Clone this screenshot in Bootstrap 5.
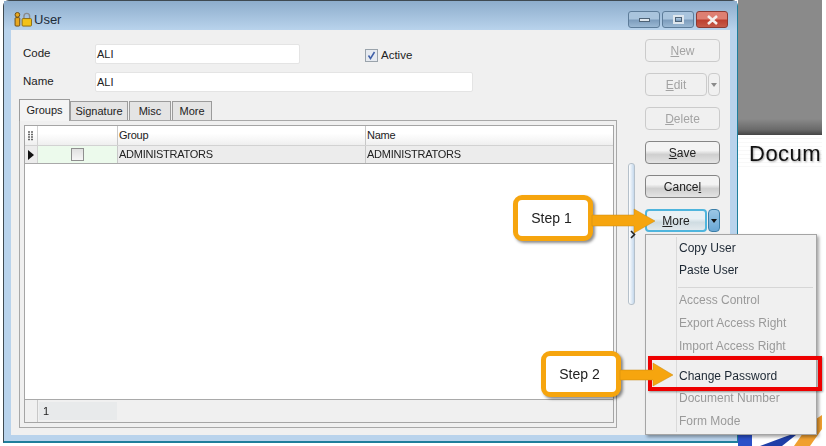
<!DOCTYPE html>
<html lang="en"><head><meta charset="utf-8"><title>User</title>
<link href="https://cdn.jsdelivr.net/npm/bootstrap@5.3.0/dist/css/bootstrap.min.css" rel="stylesheet">
<style>
html,body{margin:0;background:#fff;overflow:hidden}
body{width:826px;height:446px;font-family:"Liberation Sans",sans-serif;font-size:11px;color:#222}
.stage{position:relative;width:826px;height:446px;filter:blur(.4px)}
.deskrow{height:446px}
.spacer-left{width:3px}
.winframe{width:735px;height:443px;border:1px solid #3f4a52;border-right-color:#1f7f9c;border-bottom-color:#1f7f9c;border-bottom-width:2px;border-radius:6px 6px 0 0;background:#b9d3ec;padding:0 7px 6px 7px}
.titlebar{height:29px;margin:0 -7px;padding:8px 9px 0 9px;background:linear-gradient(#8dadcc,#b9d3ec)}
.ttl{font-size:13px;margin-left:0;color:#1d2b38}
.capb{height:17px;width:32px;border:1px solid #5d7c99;border-radius:3px;background:linear-gradient(#a9c4dd 45%,#7d9dbd 55%,#9bb8d3);margin-left:2px}
.capb.cl{background:linear-gradient(#de7f72 45%,#bd4030 55%,#c65b49);border-color:#8b3a33}
.glyph-min{width:11px;height:4px;background:#dfe7ee;border:1px solid #4d6276;margin-top:6px}
.glyph-max{width:11px;height:9px;border:2px solid #dfe7ee;outline:1px solid #4d6276;outline-offset:-3px}
.winbody{height:405px;background:#f0f0f0}
.leftpane{width:606px;padding:10px 0 0 8px}
.rightpane{width:94px;padding:9px 9px 0 10px}
.lbl{width:76px;padding-left:4px;font-size:11.5px}
.fieldrow{height:28px}
.txt{background:#fff;border:1px solid #e4e4e4;border-radius:2px;height:20px;line-height:18px;padding-left:1px}
.w1{width:205px}.w2{width:378px}
.chkwrap{margin-left:65px;margin-top:3px;font-size:11.5px}
.chk{width:13px;height:13px;border:1px solid #9aa3ab;background:#e6eaf0;margin-right:3px;display:flex;align-items:center;justify-content:center}
.tabrow{height:21px;margin-top:3px;align-items:flex-end}
.tabi{height:19px;line-height:18px;border:1px solid #9b9b9b;border-bottom:0;background:#e4e4e4;margin-right:1px;text-align:center}
.tw1{width:58px}.tw2{width:42px}.tw3{width:40px}
.tabi.on{height:22px;line-height:20px;background:#f4f4f4;margin-right:0;position:relative;top:1px;width:51px}
.tabpanel{height:308px;border:1px solid #a8a8a8;padding:4px 2px 4px 4px}
.gridbox{height:100%;border:1px solid #a5a5a5;background:#fff;letter-spacing:-.25px}
.ghead{height:19px;background:linear-gradient(#fff 40%,#efefef);line-height:19px}
.grow-row{height:19px;background:#ececec;border-top:1px solid #d2d2d2;border-bottom:1px solid #a9a9a9;line-height:17px}
.c0{width:13px;border-right:1px solid #d2d2d2;text-align:center}
.c1{width:80px;border-right:1px solid #c8c8c8}
.c2{width:248px;border-right:1px solid #c8c8c8;padding-left:1px}
.c3{flex:1;padding-left:1px}
.c1.act{background:#ecfaec}
.gbox{width:13px;height:13px;border:1px solid #8f8f8f;background:linear-gradient(#e0e0e0,#f6f6f6)}
.gstatus{height:23px;background:#f0f0f0;border-top:1px solid #a9a9a9}
.stcell{width:78px;margin:2px 0 2px 1px;background:#e8eaeb;padding-left:4px;line-height:19px}
.stgut{width:13px;border-right:1px solid #c8c8c8}
.splitbar{width:7px;height:142px;margin:133px 0 0 11px;border:1px solid #b5c0ca;border-radius:3px;background:linear-gradient(90deg,#fff,#c4d8ec)}
.btnw{height:23px;margin-bottom:11px}
.wbtn{--bs-btn-padding-y:0;--bs-btn-padding-x:0;--bs-btn-font-size:12px;--bs-btn-border-radius:4px;height:23px;width:100%;background:linear-gradient(#f3f3f3 40%,#cfcfcf 60%,#e4e4e4);border-color:#858585;color:#222}
.wbtn.dis,.wbtn.dis:disabled{background:#f0f0f0;border-color:#cbcbcb;color:#a3a3a3;opacity:1}
.wbtn.main{width:62px}
.wbtn.arr{width:12px;margin-left:1px;padding:0}
.wbtn.hot{border:2px solid #4fb5dd;background:linear-gradient(#e9f1f5 40%,#cfdce2 60%,#e2e9ed)}
.wbtn.hotarr{background:linear-gradient(#9cc7e6,#6aa7d4);border-color:#3b7ea8}
.tri{display:inline-block;border:3.5px solid transparent;border-top:4px solid #8a8a8a;border-bottom:0;vertical-align:middle}
.hotarr .tri{border-top-color:#111}
.sidepanel{width:84px;height:446px}
.graybox{height:135px;background:linear-gradient(#8a8a8a 88%,#6a6a6a 96%,#444)}
.docline{height:35px;background:repeating-linear-gradient(#fff,#fff 3px,#f1f1f1 4px);font-size:22px;letter-spacing:.5px;color:#111;padding-left:11px;line-height:38px;white-space:nowrap;text-shadow:1px 1px 2px rgba(0,0,0,.35)}
.flyout{position:absolute;left:645px;top:234px;width:172px;height:201px;background:#f0f0f0;border:1px solid #a5a5a5;box-shadow:2px 2px 3px rgba(0,0,0,.35);font-size:12px}
.flyout::before{content:"";position:absolute;left:30px;top:2px;bottom:2px;width:1px;background:#dadada}
.mi{position:absolute;left:33px;white-space:nowrap;color:#1c2733}
.mi.off{color:#9a9a9a}
.msep{position:absolute;left:32px;right:3px;top:52px;height:1px;background:#d6d6d6}
.redbox{position:absolute;left:648px;top:356px;width:174px;height:35px;border:4px solid #ee0000;box-shadow:1px 1px 2px rgba(0,0,0,.4)}
.callout{position:absolute;width:80px;height:46px;border:5px solid #f6a50e;border-radius:9px;background:#fff;box-shadow:2px 2px 3px rgba(0,0,0,.45);font-size:14px;line-height:36px;text-align:center;color:#222;padding-right:3px}
.cl1{left:513px;top:195px}.cl2{left:541px;top:351px}
.arrowsvg{position:absolute;overflow:visible}
.pin{position:absolute;left:630px;top:230px}
</style></head><body>
<div class="stage">
<div class="d-flex deskrow align-items-start">
 <div class="spacer-left"></div>
 <div class="winframe d-flex flex-column">
  <div class="titlebar d-flex align-items-center justify-content-between">
   <div class="d-flex align-items-center">
    <svg width="21" height="15" viewBox="0 0 21 16"><circle cx="4" cy="3" r="2.5" fill="#e8a820" stroke="#6b4a10"/><rect x="1.5" y="6" width="5" height="9" rx="1" fill="#e8a820" stroke="#6b4a10"/><path d="M11 7V4.5a3 3 0 0 1 6 0V7" fill="none" stroke="#8a8a8a" stroke-width="1.5"/><rect x="9" y="7" width="10" height="8" rx="1" fill="#f2c21a" stroke="#8a6a10"/></svg>
    <span class="ttl">User</span>
   </div>
   <div class="d-flex">
    <div class="capb d-flex justify-content-center"><div class="glyph-min"></div></div>
    <div class="capb d-flex justify-content-center align-items-center"><div class="glyph-max"></div></div>
    <div class="capb cl d-flex justify-content-center align-items-center"><svg width="13" height="10" viewBox="0 0 13 10"><path d="M2 1l9 8M11 1l-9 8" stroke="#f4f0ee" stroke-width="2.6"/></svg></div>
   </div>
  </div>
  <div class="winbody d-flex">
   <div class="leftpane">
    <div class="d-flex align-items-center fieldrow"><div class="lbl">Code</div><div class="txt w1">ALI</div><label class="chkwrap d-flex align-items-center"><span class="chk"><svg width="9" height="9" viewBox="0 0 9 9"><path d="M1.5 4.5l2 3 4-6.5" fill="none" stroke="#3f5fa8" stroke-width="1.5"/></svg></span>Active</label></div>
    <div class="d-flex align-items-center fieldrow"><div class="lbl">Name</div><div class="txt w2">ALI</div></div>
    <div class="d-flex tabrow">
     <div class="tabi on">Groups</div><div class="tabi tw1">Signature</div><div class="tabi tw2">Misc</div><div class="tabi tw3">More</div>
    </div>
    <div class="tabpanel">
     <div class="gridbox d-flex flex-column">
      <div class="ghead d-flex"><div class="c0"><svg width="8" height="11" viewBox="0 0 8 11"><path d="M1 1h6M1 3.5h6M1 6h6M1 8.5h6" stroke="#666" stroke-width="1.4" stroke-dasharray="2 1"/></svg></div><div class="c1"></div><div class="c2">Group</div><div class="c3">Name</div></div>
      <div class="grow-row d-flex"><div class="c0"><svg width="6" height="10" viewBox="0 0 6 10"><path d="M0 0l6 5-6 5z" fill="#111"/></svg></div><div class="c1 act d-flex align-items-center justify-content-center"><div class="gbox"></div></div><div class="c2">ADMINISTRATORS</div><div class="c3">ADMINISTRATORS</div></div>
      <div class="flex-grow-1"></div>
      <div class="gstatus d-flex"><div class="stgut"></div><div class="stcell">1</div></div>
     </div>
    </div>
   </div>
   <div class="splitbar"></div>
   <div class="rightpane">
    <div class="btnw"><button class="btn wbtn dis" disabled><u>N</u>ew</button></div>
    <div class="btnw d-flex"><button class="btn wbtn main dis" disabled><u>E</u>dit</button><button class="btn wbtn arr dis" disabled><span class="tri"></span></button></div>
    <div class="btnw"><button class="btn wbtn dis" disabled><u>D</u>elete</button></div>
    <div class="btnw"><button class="btn wbtn"><u>S</u>ave</button></div>
    <div class="btnw"><button class="btn wbtn">Cance<u>l</u></button></div>
    <div class="btnw d-flex"><button class="btn wbtn main hot"><u>M</u>ore</button><button class="btn wbtn arr hotarr"><span class="tri"></span></button></div>
   </div>
  </div>
 </div>
 <div class="sidepanel d-flex flex-column">
  <div class="graybox"></div>
  <div class="docline">Docum</div>
  <svg class="mt-auto" width="84" height="33" viewBox="0 0 84 33"><path d="M0 22H14V33H0z" fill="#2b50c8"/><path d="M22 33L52 22H58L44 33z" fill="#1f3fa8"/><path d="M56 33L72 10 84 2V16L72 33z" fill="#f0a030"/></svg>
 </div>
</div>
<svg class="arrowsvg pin" width="6" height="9" viewBox="0 0 6 9"><path d="M1 1l3.5 3.5L1 8" fill="none" stroke="#222" stroke-width="1.6"/></svg>
<div class="flyout">
 <span class="mi" style="top:4px">Copy User</span>
 <span class="mi" style="top:26px">Paste User</span>
 <div class="msep"></div>
 <span class="mi off" style="top:56px">Access Control</span>
 <span class="mi off" style="top:79px">Export Access Right</span>
 <span class="mi off" style="top:102px">Import Access Right</span>
 <span class="mi" style="top:132px">Change Password</span>
 <span class="mi off" style="top:154px">Document Number</span>
 <span class="mi off" style="top:177px">Form Mode</span>
</div>
<div class="redbox"></div>
<div class="callout cl1">Step 1</div>
<div class="callout cl2">Step 2</div>
<svg class="arrowsvg" style="left:592px;top:208px" width="64" height="26" viewBox="0 0 64 26"><path d="M0 7H42V1L63 13 42 25V18H0z" fill="#f6a50e" stroke="#c98a10" stroke-width=".5"/></svg>
<svg class="arrowsvg" style="left:620px;top:362px" width="54" height="26" viewBox="0 0 54 26"><path d="M0 8H33V1L53 13 33 24V18H0z" fill="#f6a50e" stroke="#c98a10" stroke-width=".5"/></svg>
</div>
</body></html>
